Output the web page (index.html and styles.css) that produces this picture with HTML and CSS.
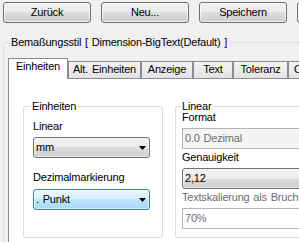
FILE: index.html
```html
<!DOCTYPE html>
<html lang="de">
<head>
<meta charset="utf-8">
<title>Bemaßungsstil</title>
<link rel="stylesheet" href="styles.css">
</head>
<body>
<div class="dialog">
  <div class="toolbar">
    <button class="btn">Zurück</button>
    <button class="btn">Neu...</button>
    <button class="btn">Speichern</button>
    <button class="btn">Schließen</button>
  </div>
  <fieldset class="style-group">
    <legend>Bemaßungsstil [ Dimension-BigText(Default) ]</legend>
    <div class="tabs">
      <div class="tab tab-active tab-units">Einheiten</div>
      <div class="tab tab-alt">Alt. Einheiten</div>
      <div class="tab tab-display">Anzeige</div>
      <div class="tab tab-text">Text</div>
      <div class="tab tab-tol">Toleranz</div>
      <div class="tab tab-opt">Optionen</div>
    </div>
    <div class="panel">
      <fieldset class="group group-units">
        <legend>Einheiten</legend>
        <div class="field-label first">Linear</div>
        <div class="combo"><span>mm</span><svg class="arrow" width="7" height="4" viewBox="0 0 7 4"><path d="M0 0H7L3.5 4Z"/></svg></div>
        <div class="field-label spaced">Dezimalmarkierung</div>
        <div class="combo combo-hot loose"><span>. Punkt</span><svg class="arrow" width="7" height="4" viewBox="0 0 7 4"><path d="M0 0H7L3.5 4Z"/></svg></div>
      </fieldset>
      <fieldset class="group group-linear">
        <legend>Linear</legend>
        <div class="field-label tight">Format</div>
        <div class="textbox textbox-disabled">0.0 Dezimal</div>
        <div class="field-label">Genauigkeit</div>
        <div class="combo combo-wide"><span>2,12</span></div>
        <div class="field-label muted">Textskalierung als Bruch</div>
        <div class="textbox">70%</div>
      </fieldset>
    </div>
  </fieldset>
</div>
</body>
</html>
```
FILE: styles.css
```css
html, body {
  margin: 0;
  overflow: hidden;
}

body {
  background: #f0f0f0;
  color: #000;
  font-family: "Liberation Sans", Arial, sans-serif;
  font-size: 11px;
  line-height: 13px;
  letter-spacing: -0.2px;
  word-spacing: 1px;
}

.dialog {
  width: 440px;
}

.toolbar {
  display: flex;
  gap: 10px;
  padding: 2px 0 0 3px;
}

.btn {
  box-sizing: border-box;
  flex: none;
  width: 88px;
  height: 21px;
  padding: 0;
  border: 1px solid #707070;
  border-radius: 3px;
  background: linear-gradient(#f2f2f2 0%, #ebebeb 50%, #dddddd 50%, #cfcfcf 100%);
  box-shadow: inset 0 0 0 1px rgba(255, 255, 255, 0.6);
  color: #000;
  font: inherit;
  letter-spacing: inherit;
  word-spacing: inherit;
  white-space: nowrap;
}

.style-group {
  min-width: 0;
  margin: 13px 0 0 3px;
  padding: 9px 0 0 4px;
  border: 1px solid #d5dfe5;
  border-radius: 3px;
}

.style-group > legend {
  margin-left: 2px;
  padding: 0 3px 0 1px;
  white-space: nowrap;
}

.tabs {
  display: flex;
  align-items: flex-end;
}

.tab {
  box-sizing: border-box;
  flex: none;
  height: 17px;
  padding-top: 1px;
  border: 1px solid #898c95;
  border-bottom: none;
  background: linear-gradient(#f5f5f5, #e2e2e2);
  text-align: center;
  white-space: nowrap;
}

.tab-active {
  position: relative;
  z-index: 1;
  height: 21px;
  margin-bottom: -1px;
  background: #fff;
}

.tab-units { width: 60px; }
.tab-alt { width: 73px; }
.tab-display { width: 52px; }
.tab-text { width: 40px; }
.tab-tol { width: 55px; }
.tab-opt { width: 70px; text-align: left; padding-left: 5px; }

.panel {
  display: flex;
  gap: 12px;
  padding: 21px 0 10px 14px;
  border: 1px solid #898c95;
  background: #fff;
}

.group {
  box-sizing: border-box;
  min-width: 0;
  margin: 0;
  border: 1px solid #d5dfe5;
  border-radius: 3px;
}

.group-units {
  flex: none;
  width: 140px;
  padding: 0 12px 27px 9px;
}

.group-units > legend {
  margin-left: -2px;
  padding: 0 2px 0 1px;
}

.group-linear {
  flex: 1;
  padding: 0 8px 0 6px;
}

.group-linear > legend {
  margin-left: -1px;
  padding: 0 2px 0 1px;
}

.field-label {
  margin-top: 2px;
  white-space: nowrap;
}

.field-label.first { margin-top: 7px; }
.field-label.spaced { margin-top: 13px; }
.field-label.tight { margin-top: -2px; }
.field-label.muted { color: #6d6d6d; }

.combo {
  box-sizing: border-box;
  display: flex;
  align-items: center;
  justify-content: space-between;
  height: 21px;
  margin-top: 4px;
  padding: 0 3px 0 2px;
  border: 1px solid #707070;
  border-radius: 3px;
  background: linear-gradient(#f2f2f2 0%, #ebebeb 50%, #dddddd 50%, #cfcfcf 100%);
  box-shadow: inset 0 0 0 1px rgba(255, 255, 255, 0.55);
  white-space: nowrap;
}

.combo.loose { margin-top: 5px; }

.combo-hot {
  border-color: #3c7fb1;
  background: linear-gradient(#eaf6fd 0%, #d9f0fc 50%, #bee6fd 50%, #a7d9f5 100%);
}

.combo-wide {
  border-radius: 3px 0 0 3px;
}

.arrow {
  flex: none;
  fill: #000;
}

.textbox {
  box-sizing: border-box;
  display: flex;
  align-items: center;
  height: 21px;
  margin-top: 4px;
  padding: 0 2px;
  border: 1px solid #b5b5b5;
  background: #fff;
  color: #6d6d6d;
  white-space: nowrap;
}

.textbox-disabled {
  background: #f4f4f4;
}
```
